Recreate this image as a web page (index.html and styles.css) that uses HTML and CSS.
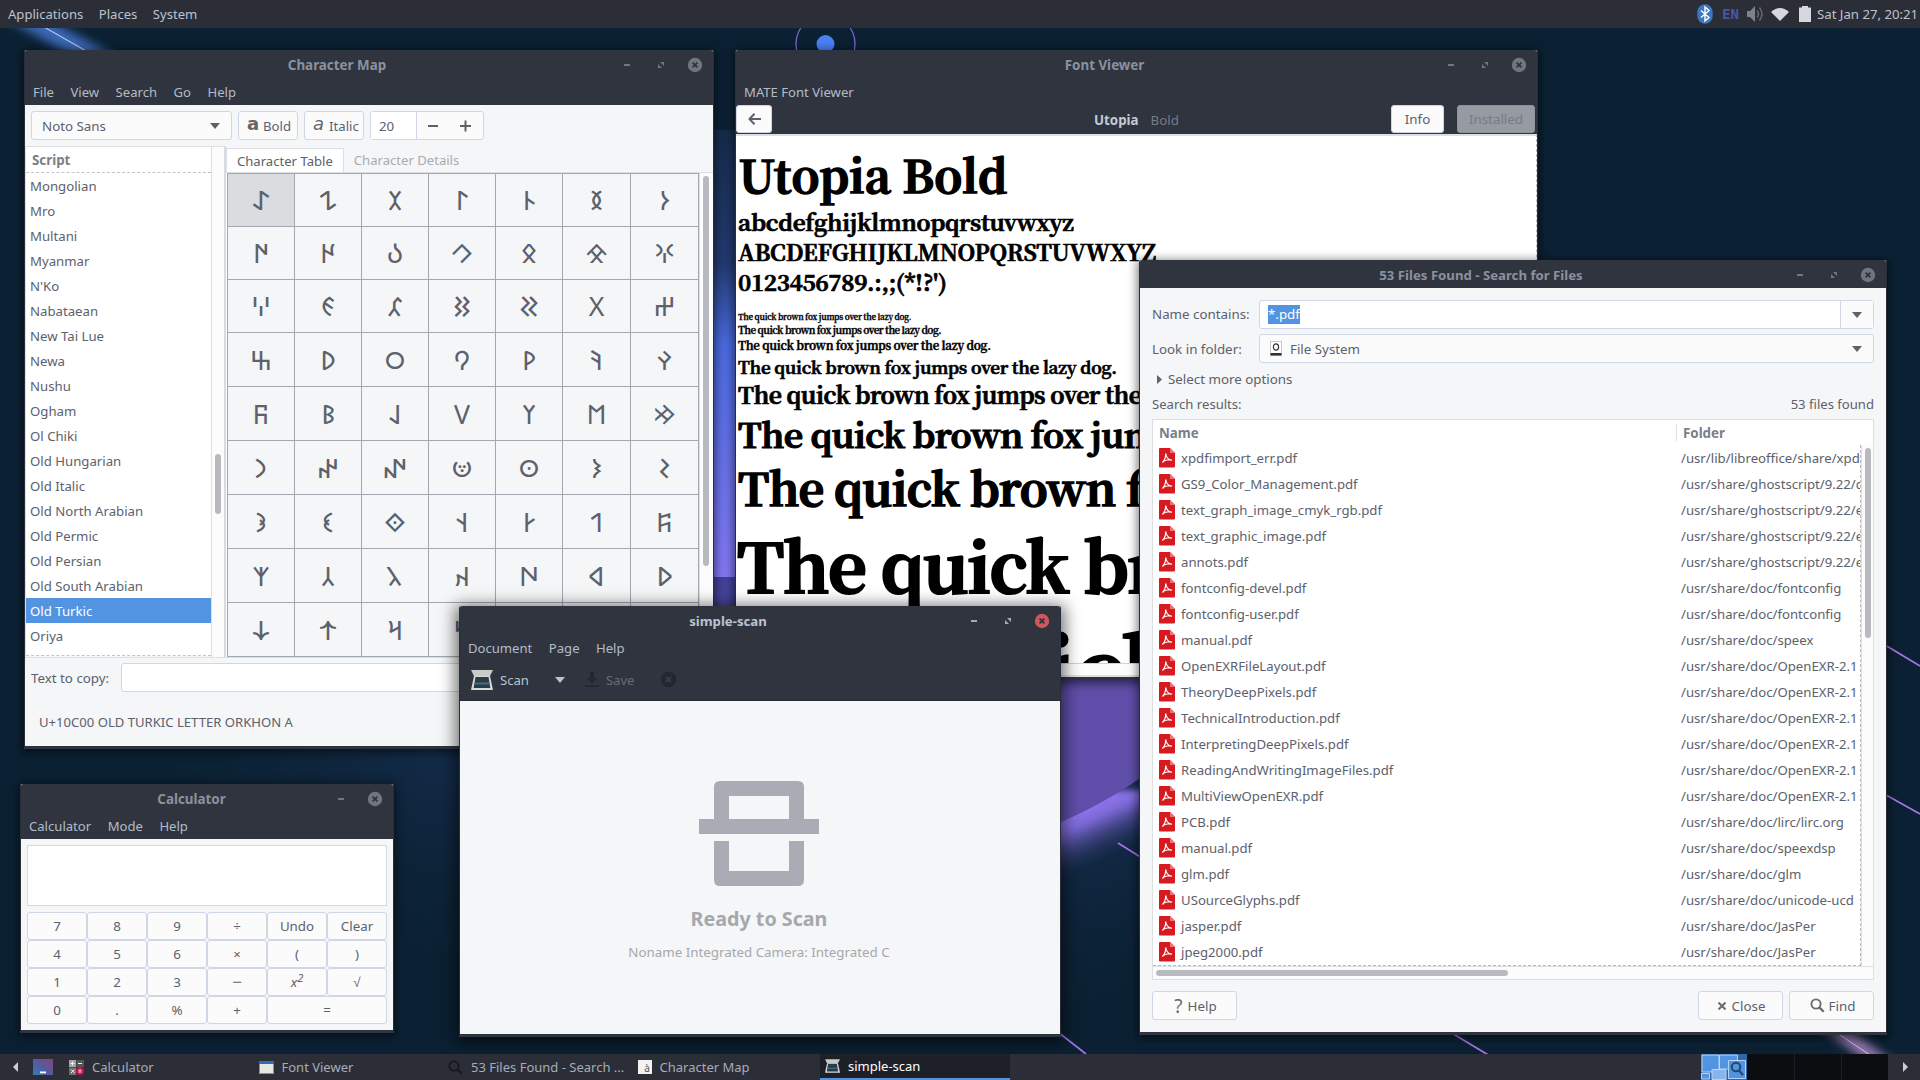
FILE: index.html
```
<!DOCTYPE html>
<html lang="en">
<head>
<meta charset="utf-8">
<title>Desktop</title>
<link rel="stylesheet" href="styles.css">
</head>
<body>
<svg class="defs" width="0" height="0">
  <symbol id="i-min" viewBox="0 0 16 16"><rect x="5" y="7" width="6" height="2"/></symbol>
  <symbol id="i-max" viewBox="0 0 16 16"><path d="M7 5h4v4zM5 7v4h4z"/></symbol>
  <symbol id="i-close" viewBox="0 0 16 16"><circle cx="8" cy="8" r="7.2"/><path d="M5.6 5.6l4.8 4.8M10.4 5.6l-4.8 4.8" stroke="#2f343f" stroke-width="1.8"/></symbol>
  <symbol id="i-down" viewBox="0 0 10 6"><path d="M0 0h10L5 6z"/></symbol>
  <symbol id="i-find" viewBox="0 0 16 16"><circle cx="6.4" cy="6.4" r="4.9" fill="none" stroke="currentColor" stroke-width="2"/><path d="M10 10l4.6 4.6" stroke="currentColor" stroke-width="2.4"/></symbol>
  <symbol id="i-pdf" viewBox="0 0 16 20"><path d="M1 0h10l5 5v13.500a1 1 0 0 1-1 1H1a1 1 0 0 1-1-1V1a1 1 0 0 1 1-1z" fill="#d71920"/><path d="M11 0l5 5h-5z" fill="#e8777b"/><path d="M6.700 5.500c.2 3-.6 6-3.200 9.200M6.800 5.500c.3 3.400 2.500 6.200 6 7M3.500 13.800c2.400-1.800 5-2.300 9.200-2" fill="none" stroke="#fff" stroke-width="1.2"/></symbol>
  <symbol id="i-scan" viewBox="0 0 22 20"><path d="M0 0h22l-3 6H3z" fill="#c9c9c6"/><path d="M3 6h16l3 14H0z" fill="#d8d8d5"/><path d="M4.500 7h13l1.800 11H2.700z" fill="#2c3a44"/><path d="M3.600 12.500h14.800l.4 2H3.200z" fill="#35718f"/></symbol>
</svg>

<svg class="wallpaper" viewBox="0 0 1920 1080" preserveAspectRatio="none">
  <defs>
    <radialGradient id="haze"><stop offset="0" stop-color="#2a4684"/><stop offset=".55" stop-color="#1c3560" stop-opacity=".8"/><stop offset="1" stop-color="#0b2133" stop-opacity="0"/></radialGradient>
    <linearGradient id="rim" x1="0" y1="0" x2="0" y2="1"><stop offset="0" stop-color="#172b4c"/><stop offset=".3" stop-color="#233b72"/><stop offset=".48" stop-color="#4a6be0"/><stop offset="1" stop-color="#8478f5"/></linearGradient>
    <linearGradient id="body" x1="0" y1="0" x2="0" y2="1"><stop offset="0" stop-color="#40429a"/><stop offset=".5" stop-color="#6450b4"/><stop offset="1" stop-color="#5c4ca4"/></linearGradient>
    <linearGradient id="glow" gradientUnits="userSpaceOnUse" x1="1090" y1="800" x2="1116" y2="856"><stop offset="0" stop-color="#9078f0"/><stop offset=".3" stop-color="#7f6ada"/><stop offset="1" stop-color="#1c2b4c" stop-opacity="0"/></linearGradient>
    <filter id="soft"><feGaussianBlur stdDeviation="3"/></filter>
    <filter id="soft2"><feGaussianBlur stdDeviation="5"/></filter>
  </defs>
  <rect width="1920" height="1080" fill="#0b2133"/>
  <ellipse cx="840" cy="560" rx="800" ry="480" fill="url(#haze)"/>
  <rect x="712" y="130" width="26" height="447" fill="url(#rim)"/>
  <rect x="712" y="577" width="430" height="180" fill="url(#body)"/>
  <path d="M1040 790h110v60l-110 60z" fill="url(#glow)" filter="url(#soft)"/>
  <path d="M1040 670h110v101q-45 34-110 60z" fill="#5f4faa"/>
  <path d="M-20 -7L110 65" stroke="#3a68b4" stroke-width="20" filter="url(#soft2)"/>
  <path d="M44 27L88 52" stroke="#a9c4f0" stroke-width="1.2"/>
  <circle cx="825.500" cy="44" r="29.500" fill="none" stroke="#7b68d0" stroke-width="1.300"/>
  <circle cx="825.500" cy="44" r="9" fill="#4a80f5"/>
  <path d="M1870 636l50 30M1870 786l50 28M1040 1018l46 36M1118 843l24 15M1450 1032l40 24" stroke="#a873e6" stroke-width="1.600"/>
  <path d="M1820 1016l70 54" stroke="#8b72a8" stroke-width="16" filter="url(#soft2)"/>
  <path d="M1840 1035l30 20" stroke="#d8c0d8" stroke-width="1"/>
</svg>

<header class="panel panel-top">
  <nav class="panel-menu"><span>Applications</span><span>Places</span><span>System</span></nav>
  <div class="tray">
    <svg width="16" height="20" viewBox="0 0 16 20"><rect x=".3" y=".3" width="15.400" height="19.400" rx="7.700" fill="#3d78bd"/><path d="M4 6.500l8 7-4 3.500V3l4 3.500-8 7" fill="none" stroke="#fff" stroke-width="1.400"/></svg>
    <b class="lang">EN</b>
    <svg class="vol" width="17" height="16" viewBox="0 0 17 16"><path d="M0 5h3l5-5v16l-5-5H0z" fill="#7d828b"/><path d="M10 4.500q3 3.500 0 7M12.500 1.500q5 6.500 0 13" fill="none" stroke="#646973" stroke-width="1.500"/></svg>
    <svg class="wifi" width="18" height="13" viewBox="0 0 18 13"><path d="M0 4Q9-4 18 4L9 13z" fill="#d5d9dd"/></svg>
    <svg class="bat" width="12" height="16" viewBox="0 0 12 16"><path d="M3 0h6v1.500h3V16H0V1.500h3z" fill="#d5d9dd"/></svg>
    <span class="clock">Sat Jan 27, 20:21</span>
  </div>
</header>

<main class="desktop">
<section class="window charmap">
  <div class="titlebar"><h1>Character Map</h1><div class="controls"><svg><use href="#i-min"/></svg><svg><use href="#i-max"/></svg><svg><use href="#i-close"/></svg></div></div>
  <nav class="menubar"><span>File</span><span>View</span><span>Search</span><span>Go</span><span>Help</span></nav>
  <div class="cm-tools">
    <div class="btn cm-font">Noto Sans<svg class="arrow"><use href="#i-down"/></svg></div>
    <div class="btn style"><b class="ic">a</b>Bold</div>
    <div class="btn style"><b class="ic it">a</b>Italic</div>
    <div class="btn spin"><span>20</span><svg width="66" height="12" viewBox="0 0 66 12"><path d="M11 6h10M43 6h11M48.500 .500v11" stroke="#5c616c" stroke-width="2"/></svg></div>
  </div>
  <div class="cm-main">
    <div class="scripts">
      <div class="list"><h2>Script</h2><ul id="scripts"></ul></div>
      <div class="vbar"><i></i></div>
    </div>
    <div class="tabs">
      <div class="tab-row"><span class="on">Character Table</span><span>Character Details</span></div>
      <div class="table-row"><div class="chars" id="chars"></div><div class="vbar"><i></i></div></div>
    </div>
  </div>
  <div class="cm-copy"><label>Text to copy:</label><div class="entry"></div></div>
  <div class="cm-status">U+10C00 OLD TURKIC LETTER ORKHON A</div>
</section>

<section class="window fonts">
  <div class="titlebar"><h1>Font Viewer</h1><div class="controls"><svg><use href="#i-min"/></svg><svg><use href="#i-max"/></svg><svg><use href="#i-close"/></svg></div></div>
  <nav class="menubar"><span>MATE Font Viewer</span></nav>
  <div class="fv-head">
    <div class="btn back"><svg width="13" height="12" viewBox="0 0 13 12"><path d="M6.500 .800L1.500 6l5 5.200M2 6h11" fill="none" stroke="#5c616c" stroke-width="2"/></svg></div>
    <p><b>Utopia</b><span>Bold</span></p>
    <div class="btn info">Info</div><div class="btn off">Installed</div>
  </div>
  <div class="fv-page">
    <svg width="799" height="529" viewBox="736 136 799 529">
      <text x="738.500" y="193" font-size="45" textLength="269">Utopia Bold</text>
      <text x="738" y="231" font-size="22.500" textLength="336">abcdefghijklmnopqrstuvwxyz</text>
      <text x="738" y="260.500" font-size="22.500" textLength="418">ABCDEFGHIJKLMNOPQRSTUVWXYZ</text>
      <text x="738" y="290.500" font-size="22.500" textLength="209">0123456789.:,;(*!?')</text>
      <text x="738" y="319.500" font-size="8" textLength="173.500">The quick brown fox jumps over the lazy dog.</text>
      <text x="738" y="334" font-size="9.800" textLength="203.500">The quick brown fox jumps over the lazy dog.</text>
      <text x="738" y="350" font-size="11.500" textLength="253">The quick brown fox jumps over the lazy dog.</text>
      <text x="738" y="374" font-size="17" textLength="379">The quick brown fox jumps over the lazy dog.</text>
      <text x="738" y="404" font-size="23" textLength="508">The quick brown fox jumps over the lazy dog.</text>
      <text x="738" y="448" font-size="34" textLength="757">The quick brown fox jumps over the lazy dog.</text>
      <text x="738" y="506" font-size="45" textLength="1004">The quick brown fox jumps over the lazy dog.</text>
      <text x="737" y="592.500" font-size="68" textLength="1502">The quick brown fox jumps over the lazy dog.</text>
      <text x="737" y="706" font-size="91" textLength="2003">The quick brown fox jumps over the lazy dog.</text>
    </svg>
  </div>
  <div class="fv-hbar"></div>
</section>

<section class="window search">
  <div class="titlebar"><h1>53 Files Found - Search for Files</h1><div class="controls"><svg><use href="#i-min"/></svg><svg><use href="#i-max"/></svg><svg><use href="#i-close"/></svg></div></div>
  <div class="sf-body">
    <div class="field"><label>Name contains:</label><div class="entry combo"><mark>*.pdf</mark><span class="drop"><svg class="arrow"><use href="#i-down"/></svg></span></div></div>
    <div class="field"><label>Look in folder:</label><div class="btn folder"><svg width="12" height="15" viewBox="0 0 12 15"><rect x=".5" y=".5" width="11" height="14" fill="#fff" stroke="#c8c8c8"/><rect x=".5" y="12" width="11" height="2.500" fill="#333"/><ellipse cx="6" cy="6" rx="2.600" ry="3.200" fill="none" stroke="#333" stroke-width="1.200"/></svg>File System<svg class="arrow"><use href="#i-down"/></svg></div></div>
    <div class="more"><svg width="5" height="9" viewBox="0 0 5 9"><path d="M0 0l5 4.500L0 9z" fill="#5c616c"/></svg>Select more options</div>
    <div class="sum"><span>Search results:</span><span>53 files found</span></div>
    <div class="tree">
      <div class="tree-head"><b>Name</b><b class="f">Folder</b></div>
      <div class="tree-mid"><div class="rows" id="files"></div><div class="vbar"><i></i></div></div>
      <div class="hbar"><i></i></div>
    </div>
    <div class="actions">
      <div class="btn"><b class="q">?</b>Help</div>
      <div class="gap"></div>
      <div class="btn"><svg width="8" height="8" viewBox="0 0 8 8"><path d="M.5 .5l7 7M7.500 .5l-7 7" stroke="#6a6a6a" stroke-width="2"/></svg>Close</div>
      <div class="btn"><svg class="mag" width="15" height="15"><use href="#i-find"/></svg>Find</div>
    </div>
  </div>
</section>

<section class="window calc">
  <div class="titlebar"><h1>Calculator</h1><div class="controls"><svg><use href="#i-min"/></svg><svg><use href="#i-close"/></svg></div></div>
  <nav class="menubar"><span>Calculator</span><span>Mode</span><span>Help</span></nav>
  <div class="calc-body">
    <div class="display"></div>
    <div class="keys">
      <span>7</span><span>8</span><span>9</span><span>÷</span><span>Undo</span><span>Clear</span>
      <span>4</span><span>5</span><span>6</span><span>×</span><span>(</span><span>)</span>
      <span>1</span><span>2</span><span>3</span><span class="minus">−</span><span><i>x<sup>2</sup></i></span><span>√</span>
      <span>0</span><span>.</span><span>%</span><span>+</span><span class="wide">=</span>
    </div>
  </div>
</section>

<section class="window scan">
  <div class="titlebar"><h1>simple-scan</h1><div class="controls"><svg><use href="#i-min"/></svg><svg><use href="#i-max"/></svg><svg class="red"><use href="#i-close"/></svg></div></div>
  <nav class="menubar"><span>Document</span><span>Page</span><span>Help</span></nav>
  <div class="sc-tools">
    <svg width="22" height="20"><use href="#i-scan"/></svg><span>Scan</span>
    <svg class="dd" width="10" height="6"><use href="#i-down"/></svg>
    <svg class="save" width="14" height="15" viewBox="0 0 14 15"><path d="M5 0h4v6h3l-5 6-5-6h3zM0 13.300h14V15H0z" fill="#232731"/></svg><span class="dim">Save</span>
    <svg class="stop" width="15" height="15" viewBox="0 0 15 15"><path d="M4.500 0h6L15 4.500v6L10.500 15h-6L0 10.500v-6z" fill="#232731"/><path d="M5 5l5 5M10 5l-5 5" stroke="#373c49" stroke-width="1.800"/></svg>
  </div>
  <div class="sc-body">
    <svg width="120" height="105" viewBox="0 0 120 105"><path d="M15 38V6q0-6 6-6h78q6 0 6 6v32h15v15H0V38zM30 38h60V15H30zM15 60h15v30h60V60h15v39q0 6-6 6H21q-6 0-6-6z" fill="#a9acb4" fill-rule="evenodd"/></svg>
    <h2>Ready to Scan</h2>
    <p>Noname Integrated Camera: Integrated C</p>
  </div>
</section>
</main>

<footer class="panel panel-bottom">
  <svg class="nav-l" width="5" height="10" viewBox="0 0 5 10"><path d="M5 0v10L0 5z" fill="#c9cdd5"/></svg>
  <svg class="show" width="20" height="16" viewBox="0 0 20 16"><defs><linearGradient id="sd" x1="0" y1="1" x2="1" y2="0"><stop offset="0" stop-color="#2f7db8"/><stop offset=".5" stop-color="#555a9e"/><stop offset="1" stop-color="#8a3f7d"/></linearGradient></defs><rect width="20" height="16" fill="url(#sd)"/><rect x="7" y="12.500" width="6" height="1.800" fill="#fff"/></svg>
  <div class="task"><svg width="15" height="15" viewBox="0 0 15 15"><path d="M0 0h7v7H0z" fill="#a3a3a3"/><path d="M7.500 0H15v7H7.500z" fill="#555"/><path d="M0 7.500h7V15H0z" fill="#6f6f6f"/><circle cx="11" cy="11" r="4" fill="#c8144f"/><path d="M3.500 1.500v4M1.500 3.500h4M9 3.500h4M2 9.500l3.500 3.500M5.500 9.500L2 13M9.500 10.200h3M9.500 12h3" stroke="#f3f3f3"/></svg>Calculator</div>
  <div class="task"><svg width="15" height="13" viewBox="0 0 15 13"><rect width="15" height="13" fill="#e9e7e1"/><rect width="15" height="3" fill="#2f6cc0"/><path d="M.5 3v9.500h14V3" fill="none" stroke="#8f8f8a"/></svg>Font Viewer</div>
  <div class="task"><svg class="dark" width="15" height="15"><use href="#i-find"/></svg>53 Files Found - Search ...</div>
  <div class="task"><svg width="14" height="14" viewBox="0 0 14 14"><rect width="14" height="14" fill="#f2f2ee"/><text x="9" y="11.500" font-size="10" text-anchor="middle" fill="#555">à</text></svg>Character Map</div>
  <div class="task on"><svg width="15" height="14"><use href="#i-scan"/></svg>simple-scan</div>
  <div class="gap"></div>
  <svg class="pager" width="187" height="26" viewBox="0 0 187 26"><rect width="187" height="26" fill="#0c0d11"/><path d="M93.500 0v26M140.500 0v26" stroke="#1d1f26"/><rect width="46" height="26" fill="#3465a4"/><g fill="#5294e2" stroke="#b5d3f5"><path d="M1 1h17v17H1zM18.500 1h18v14h-18zM.5 19.500h8v5.500h-8z"/><path d="M11 15.500h14v10H11z" fill="#86b4ec"/><path d="M27.500 6.500h17v18h-17z"/></g><circle cx="35" cy="13" r="4.300" fill="none" stroke="#20476f" stroke-width="2"/><path d="M38 16.500l4 4.500" stroke="#20476f" stroke-width="2.200"/></svg>
  <svg class="nav-r" width="5" height="10" viewBox="0 0 5 10"><path d="M0 0v10l5-5z" fill="#c9cdd5"/></svg>
</footer>
<script src="desktop.js"></script>
</body>
</html>
```
FILE: styles.css
```
* { box-sizing: border-box; }
body { margin: 0; width: 1920px; height: 1080px; overflow: hidden; position: relative; font: 13.33px/18px "Noto Sans", sans-serif; color: #5c616c; background: #0b2133; display: flex; flex-direction: column; justify-content: space-between; }
h1, h2, p, ul { margin: 0; padding: 0; list-style: none; font-size: inherit; font-weight: inherit; }
svg { flex: none; display: block; }
.defs { position: absolute; }
.wallpaper { position: absolute; left: 0; top: 0; width: 1920px; height: 1080px; }
.gap { flex: 1; }

.panel { position: relative; z-index: 0; display: flex; align-items: center; background: #2b2e37; color: #bac3cf; white-space: nowrap; }
.panel-top { height: 28px; padding-left: 8px; justify-content: space-between; font-size: 13.1px; }
.panel-menu { display: flex; gap: 15.5px; }
.tray { display: flex; align-items: center; width: 223px; font-size: 13.2px; }
.lang { margin: 0 8px 0 9px; color: #4957a6; font: bold 14px "DejaVu Sans Mono", monospace; width: 17px; }
.vol { margin-right: 7px; }
.wifi { margin-right: 10px; }
.bat { margin-right: 6px; }
.panel-bottom { height: 26px; color: #a5adb9; font-size: 13px; }
.nav-l { margin: 0 15px 0 13px; }
.show { margin-right: 9px; }
.nav-r { margin: 0 12px 0 15px; }
.task { width: 189.500px; height: 26px; display: flex; align-items: center; gap: 8px; padding-left: 7px; }
.task.on { width: 190px; padding-left: 5px; background: #1e2028; color: #fff; border-bottom: 2px solid #5294e2; }
.dark { color: #171920; }

.desktop { position: absolute; inset: 0; }
.window { position: absolute; display: flex; flex-direction: column; background: #f5f6f7; border: 1px solid #2b2e38; border-top: 0; border-bottom: 3px solid #2f343f; border-radius: 2px 2px 0 0; box-shadow: 0 2px 10px 2px rgba(0, 0, 0, .5); white-space: nowrap; }
.titlebar { height: 28px; flex: none; display: flex; align-items: center; background: #2f343f; color: #8b919d; padding-top: 1px; border-radius: 2px 2px 0 0; }
.titlebar h1 { flex: 1; text-align: center; font-weight: bold; font-size: 13.4px; padding-left: 30px; }
.controls { display: flex; gap: 18px; padding-right: 10px; }
.controls svg { width: 16px; height: 16px; fill: #70757f; }
.menubar { height: 27px; flex: none; display: flex; align-items: center; gap: 16.500px; padding: 1px 0 1px 8px; background: #2f343f; color: #b3bcc8; font-size: 13.1px; }
.btn, .entry { height: 29px; border: 1px solid #cfd6e6; border-radius: 3px; background: #fbfbfc; display: flex; align-items: center; }
.entry { background: #fff; }
.arrow { width: 10px; height: 6px; fill: #5c616c; margin-left: auto; }
.vbar { width: 13px; background: #fcfcfc; border-left: 1px solid #dcdfe3; padding-left: 3px; }
.vbar i { display: block; width: 6px; border-radius: 3px; background: #b8babf; }

.charmap { left: 24px; top: 50px; width: 690px; height: 699px; }
.cm-tools { display: flex; gap: 6px; padding: 6px 6px 5px; height: 41px; flex: none; }
.cm-tools .cm-font { width: 201px; padding: 0 11px 0 10px; }
.cm-tools .style { width: 60px; padding-left: 8px; font-size: 13.2px; }
.ic { font: bold 18px/16px "DejaVu Sans", sans-serif; color: #666; margin-right: 3px; padding-bottom: 3px; width: 13px; }
.it { font-style: italic; font-weight: normal; }
.cm-tools .spin { width: 114px; padding: 0; }
.spin span { width: 48px; height: 27px; padding: 5px 0 0 8px; background: #fff; border-right: 1px solid #cfd6e6; }
.cm-main { display: flex; height: 512px; flex: none; border-bottom: 1px solid #dcdfe3; }
.scripts { width: 201px; display: flex; border: 1px solid #dcdfe3; border-bottom: 0; border-right: 2px solid #d8dce2; }
.list { flex: 1; background: #fff; border-bottom: 1px dashed #c2c4c8; margin-bottom: 1px; }
.list h2 { height: 26px; padding: 4px 0 0 6px; font-weight: bold; color: #7a7f89; border-bottom: 1px dashed #c2c4c8; }
.list li { height: 25px; padding: 4px 0 0 4px; font-size: 13.2px; }
.list li.on { background: #5294e2; color: #fff; }
.scripts .vbar { padding-top: 307px; }
.scripts .vbar i { height: 60px; }
.tabs { flex: 1; }
.tab-row { height: 27px; display: flex; padding-top: 2px; border-bottom: 1px solid #dcdfe3; color: #a8abb2; font-size: 13.1px; }
.tab-row span { padding: 3px 10px 0; }
.tab-row .on { background: #fff; color: #5c616c; border: 1px solid #dcdfe3; border-bottom: 0; }
.table-row { display: flex; background: #fff; padding-left: 1px; }
.chars { width: 472px; display: grid; grid-template-columns: repeat(5, 67px) 68px 68px; grid-template-rows: repeat(3, 53px) repeat(6, 54px); border: 1px solid #a2a8b2; border-width: 1px 0 0 1px; background: #f5f6f7; }
.chars span { border: 1px solid #a2a8b2; border-width: 0 1px 1px 0; display: flex; justify-content: center; align-items: center; font: 26.67px/30px "Noto Sans Old Turkic", "Noto Sans", sans-serif; }
.chars span:first-child { background: #d9dde0; }
.table-row .vbar { height: 484px; flex: 1; padding-top: 3px; padding-left: 3px; }
.table-row .vbar i { height: 390px; }
.cm-copy { display: flex; align-items: center; gap: 12px; padding: 5px 6px 0; }
.cm-copy .entry { flex: 1; }
.cm-status { padding: 21px 0 0 14px; font-size: 13.1px; }

.fonts { left: 735px; top: 50px; width: 803px; height: 630px; }
.fv-head { height: 29px; flex: none; display: flex; background: #2f343f; }
.fv-head .btn { height: 28px; justify-content: center; }
.back { width: 36px; }
.fv-head p { flex: 1; display: flex; gap: 12px; padding: 6px 0 0 322px; }
.fv-head b { color: #c3cad5; }
.fv-head p span { color: #747b88; }
.info { width: 53px; margin-right: 13px; }
.fv-head .off { width: 78px; margin-right: 2px; background: #969aa1; border-color: #8e939c; color: #777c86; }
.fv-page { height: 530px; flex: none; background: #fff; border-top: 2px solid #dcdfe3; border-right: 1px dashed #b9bbbf; border-bottom: 1px solid #cfd1d6; overflow: hidden; }
.fv-page text { font-family: "Noto Serif CJK SC", "Liberation Serif", serif; font-weight: 700; fill: #000; stroke: #000; stroke-width: .032em; }
.fv-hbar { flex: 1; background: #fcfcfc; border-bottom: 2px solid #dcdfe3; }

.search { left: 1139px; top: 260px; width: 748px; height: 775px; }
.search h1 { font-size: 13.2px; }
.sf-body { flex: 1; padding: 12px 12px 0; }
.field { display: flex; align-items: center; margin-bottom: 5px; }
.field label { width: 107px; }
.field:first-child label { padding-bottom: 2px; }
.field .entry, .folder { flex: 1; }
.entry mark { margin: 0 0 1px 8px; background: #5294e2; color: #fff; height: 19px; }
.drop { margin-left: auto; width: 33px; height: 27px; border-left: 1px solid #cfd6e6; background: #fbfbfc; display: flex; align-items: center; padding-right: 11px; }
.folder { padding: 0 11px 0 10px; gap: 8px; }
.more { padding: 0 0 2px 5px; display: flex; align-items: center; gap: 6px; height: 24px; }
.sum { display: flex; justify-content: space-between; height: 27px; padding-top: 3px; font-size: 13.100px; }
.tree { height: 561px; border: 1px solid #dcdfe3; background: #fff; display: flex; flex-direction: column; }
.tree-head { height: 25px; flex: none; display: flex; padding: 4px 0 0 6px; color: #7a7f89; margin-right: 13px; }
.tree-head b { width: 517px; }
.tree-head .f { width: auto; border-left: 1px solid #dcdfe3; padding-left: 6px; height: 17px; }
.tree-mid { height: 521px; display: flex; }
.rows { width: 708px; overflow: hidden; border-right: 1px dashed #b9bbbf; border-bottom: 1px dashed #b9bbbf; }
.row { height: 26px; display: flex; align-items: center; padding-left: 6px; font-size: 13.2px; }
.row svg { width: 16px; height: 20px; margin-right: 6px; }
.row .name { flex: none; width: 500px; }
.row .dir { flex: none; width: 179px; overflow: hidden; }
.tree .vbar { padding-top: 3px; flex: 1; }
.tree .vbar i { height: 190px; }
.hbar { flex: 1; background: #fcfcfc; border-top: 1px solid #dcdfe3; padding: 3px; }
.hbar i { display: block; height: 6px; width: 352px; border-radius: 3px; background: #b8babf; }
.actions { display: flex; gap: 6px; padding-top: 11px; }
.actions .btn { width: 85px; justify-content: center; gap: 6px; padding-left: 2px; }
.actions .mag { color: #6a6a6a; margin-right: -2px; }
.q { font: 19px/20px "Noto Sans", sans-serif; color: #6a6a6a; margin-right: -1px; }

.calc { left: 20px; top: 784px; width: 374px; height: 249px; }
.calc h1 { padding-left: 29px; }
.calc-body { padding: 6px; flex: 1; }
.display { height: 61px; background: #fff; border: 1px solid #d6dae0; margin-bottom: 6px; }
.keys { display: grid; grid-template-columns: repeat(6, 60px); grid-auto-rows: 28px; }
.keys span { border: 1px solid #cfd6e6; border-radius: 3px; background: #fbfbfc; display: flex; align-items: center; justify-content: center; }
.keys .wide { grid-column: span 2; }
.keys .minus { font-size: 17px; }
.keys sup { font-size: 11px; line-height: 0; }

.scan { left: 459px; top: 606px; width: 602px; height: 431px; box-shadow: 0 3px 16px 4px rgba(0, 0, 0, .55); }
.scan h1 { color: #bac3cf; font-size: 13.2px; }
.scan .controls svg { fill: #a5acb7; }
.scan .controls .red { fill: #cc575d; }
.sc-tools { height: 40px; flex: none; background: #2f343f; border-bottom: 1px solid #262a33; display: flex; align-items: center; padding: 0 0 2px 11px; color: #bac3cf; font-size: 13.1px; }
.sc-tools span { margin-left: 7px; }
.dd { fill: #bac3cf; margin: 0 20px 0 26px; }
.sc-tools .dim { color: #656b77; margin-left: 7px; }
.stop { margin-left: 26px; }
.sc-body { flex: 1; display: flex; flex-direction: column; align-items: center; padding: 80px 2px 0 0; color: #a5a8ae; }
.sc-body h2 { font-weight: bold; font-size: 19.700px; line-height: 26px; margin: 20px 0 11px; }
```
FILE: desktop.js
```
const scripts = ["Mongolian", "Mro", "Multani", "Myanmar", "N'Ko", "Nabataean", "New Tai Lue", "Newa", "Nushu", "Ogham", "Ol Chiki", "Old Hungarian", "Old Italic", "Old North Arabian", "Old Permic", "Old Persian", "Old South Arabian", "Old Turkic", "Oriya"];
document.getElementById("scripts").innerHTML = scripts
  .map(s => `<li${s === "Old Turkic" ? ' class="on"' : ""}>${s}</li>`).join("");

// Old Turkic block, seven characters per row
let cells = "";
for (let i = 0; i < 63; i++) cells += `<span>${String.fromCodePoint(0x10C00 + i)}</span>`;
document.getElementById("chars").innerHTML = cells;

const exr = "OpenEXR-2.1";
const files = [
  ["xpdfimport_err.pdf", "/usr/lib/libreoffice/share/xpd"],
  ["GS9_Color_Management.pdf", "/usr/share/ghostscript/9.22/d"],
  ["text_graph_image_cmyk_rgb.pdf", "/usr/share/ghostscript/9.22/e"],
  ["text_graphic_image.pdf", "/usr/share/ghostscript/9.22/e"],
  ["annots.pdf", "/usr/share/ghostscript/9.22/e"],
  ["fontconfig-devel.pdf", "/usr/share/doc/fontconfig"],
  ["fontconfig-user.pdf", "/usr/share/doc/fontconfig"],
  ["manual.pdf", "/usr/share/doc/speex"],
  ["OpenEXRFileLayout.pdf", "/usr/share/doc/" + exr],
  ["TheoryDeepPixels.pdf", "/usr/share/doc/" + exr],
  ["TechnicalIntroduction.pdf", "/usr/share/doc/" + exr],
  ["InterpretingDeepPixels.pdf", "/usr/share/doc/" + exr],
  ["ReadingAndWritingImageFiles.pdf", "/usr/share/doc/" + exr],
  ["MultiViewOpenEXR.pdf", "/usr/share/doc/" + exr],
  ["PCB.pdf", "/usr/share/doc/lirc/lirc.org"],
  ["manual.pdf", "/usr/share/doc/speexdsp"],
  ["glm.pdf", "/usr/share/doc/glm"],
  ["USourceGlyphs.pdf", "/usr/share/doc/unicode-ucd"],
  ["jasper.pdf", "/usr/share/doc/JasPer"],
  ["jpeg2000.pdf", "/usr/share/doc/JasPer"]
];
document.getElementById("files").innerHTML = files
  .map(([n, d]) => `<div class="row"><svg><use href="#i-pdf"/></svg><span class="name">${n}</span><span class="dir">${d}</span></div>`).join("");
```
